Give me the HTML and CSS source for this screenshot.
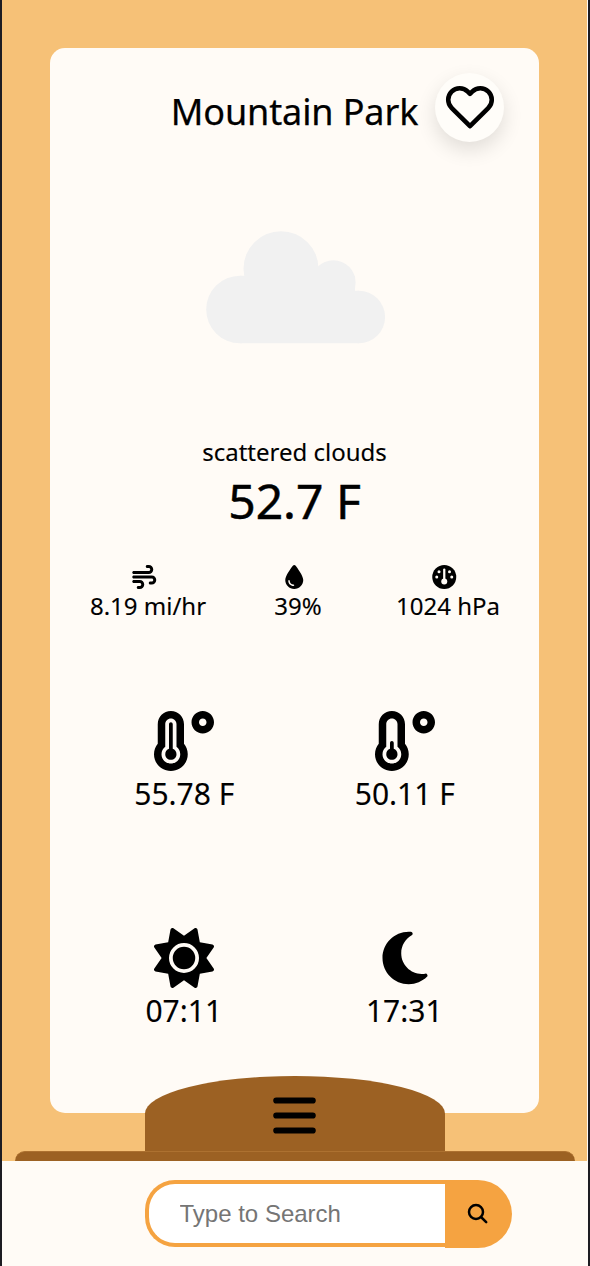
FILE: index.html
```html
<!DOCTYPE html>
<html lang="en">
<head>
<meta charset="utf-8">
<title>Mountain Park</title>
<link rel="stylesheet" href="styles.css">
</head>
<body>
<div class="app">
  <main class="stage">
    <section class="card">
      <header class="head">
        <h1 class="city">Mountain Park</h1>
        <button class="fav" aria-label="Favourite">
          <svg class="heart" viewBox="0 0 24 24"><path d="M20.84 4.61a5.5 5.5 0 0 0-7.78 0L12 5.67l-1.06-1.06a5.5 5.5 0 0 0-7.78 7.78l1.06 1.06L12 21.23l7.78-7.78 1.06-1.06a5.5 5.5 0 0 0 0-7.78z"/></svg>
        </button>
      </header>
      <svg class="cloud" viewBox="0 0 180 113">
        <circle cx="34" cy="78.5" r="33.8"/><circle cx="75" cy="37.7" r="37.5"/><circle cx="127.4" cy="51.5" r="22.2"/><circle cx="152.8" cy="86" r="26.3"/>
        <path d="M34 112.3V44.7H149V59.7H153V112.3z"/>
      </svg>
      <p class="summary">scattered clouds</p>
      <p class="now">52.7 F</p>
      <div class="stats">
        <div class="stat">
          <svg class="icon-sm" viewBox="0 0 512 512"><path d="M288 32c0 17.700 14.300 32 32 32h32c17.700 0 32 14.300 32 32s-14.300 32-32 32H32c-17.700 0-32 14.300-32 32s14.300 32 32 32H352c53 0 96-43 96-96s-43-96-96-96H320c-17.700 0-32 14.300-32 32zm64 352c0 17.700 14.300 32 32 32h32c53 0 96-43 96-96s-43-96-96-96H32c-17.700 0-32 14.300-32 32s14.300 32 32 32H416c17.700 0 32 14.300 32 32s-14.300 32-32 32H384c-17.700 0-32 14.300-32 32zM128 512h32c53 0 96-43 96-96s-43-96-96-96H32c-17.700 0-32 14.300-32 32s14.300 32 32 32H160c17.700 0 32 14.300 32 32s-14.300 32-32 32H128c-17.700 0-32 14.300-32 32s14.300 32 32 32z"/></svg>
          <span class="stat-label">8.19 mi/hr</span>
        </div>
        <div class="stat">
          <svg class="icon-sm" viewBox="-64 0 512 512"><path d="M192 512C86 512 0 426 0 320C0 228.800 130.200 57.700 166.600 11.700C172.600 4.200 181.500 0 191.100 0h1.800c9.600 0 18.500 4.200 24.500 11.700C253.800 57.700 384 228.800 384 320c0 106-86 192-192 192zM96 336c0-8.800-7.200-16-16-16s-16 7.200-16 16c0 61.900 50.100 112 112 112c8.800 0 16-7.200 16-16s-7.200-16-16-16c-44.200 0-80-35.800-80-80z"/></svg>
          <span class="stat-label">39%</span>
        </div>
        <div class="stat">
          <svg class="icon-sm" viewBox="0 0 512 512"><circle cx="256" cy="256" r="256"/><g class="cut"><rect x="232" y="72" width="48" height="260" rx="24"/><circle cx="256" cy="352" r="64"/><circle cx="144" cy="144" r="32"/><circle cx="368" cy="144" r="32"/><circle cx="96" cy="256" r="32"/><circle cx="416" cy="256" r="32"/></g></svg>
          <span class="stat-label">1024 hPa</span>
        </div>
      </div>
      <div class="pair temps">
        <div class="item">
          <svg class="icon-lg" viewBox="0 0 512 512"><path d="M416 0c-52.900 0-96 43.100-96 96s43.100 96 96 96 96-43.100 96-96-43.100-96-96-96zm0 128c-17.700 0-32-14.300-32-32s14.300-32 32-32 32 14.300 32 32-14.300 32-32 32zm-160-16C256 50.100 205.900 0 144 0S32 50.100 32 112v166.500C12.300 303.200 0 334 0 368c0 79.500 64.500 144 144 144s144-64.500 144-144c0-34-12.300-64.900-32-89.500V112zM144 448c-44.100 0-80-35.900-80-80 0-25.500 12.200-48.900 32-63.800V112c0-26.500 21.500-48 48-48s48 21.500 48 48v192.200c19.800 14.800 32 38.300 32 63.800 0 44.100-35.900 80-80 80zm16-125.100V112c0-8.800-7.200-16-16-16s-16 7.200-16 16v210.900c-18.600 6.600-32 24.200-32 45.100 0 26.500 21.500 48 48 48s48-21.500 48-48c0-20.900-13.400-38.500-32-45.100z"/></svg>
          <span class="item-label">55.78 F</span>
        </div>
        <div class="item">
          <svg class="icon-lg" viewBox="0 0 512 512"><path d="M416 0c-52.900 0-96 43.100-96 96s43.100 96 96 96 96-43.100 96-96-43.100-96-96-96zm0 128c-17.700 0-32-14.300-32-32s14.300-32 32-32 32 14.300 32 32-14.300 32-32 32zm-160-16C256 50.100 205.900 0 144 0S32 50.100 32 112v166.500C12.300 303.200 0 334 0 368c0 79.500 64.500 144 144 144s144-64.500 144-144c0-34-12.300-64.900-32-89.500V112zM144 448c-44.100 0-80-35.900-80-80 0-25.500 12.200-48.900 32-63.800V112c0-26.500 21.500-48 48-48s48 21.500 48 48v192.200c19.800 14.800 32 38.300 32 63.800 0 44.100-35.900 80-80 80zm16-125.100V272c0-8.800-7.200-16-16-16s-16 7.200-16 16v50.900c-18.600 6.600-32 24.200-32 45.100 0 26.500 21.500 48 48 48s48-21.500 48-48c0-20.900-13.400-38.500-32-45.100z"/></svg>
          <span class="item-label">50.11 F</span>
        </div>
      </div>
      <div class="pair times">
        <div class="item">
          <svg class="icon-lg" viewBox="0 0 512 512"><path d="M361.500 1.200c5 2.100 8.600 6.600 9.600 11.900L391 121l107.900 19.800c5.300 1 9.800 4.600 11.900 9.600s1.500 10.700-1.600 15.200L446.900 256l62.300 90.300c3.100 4.500 3.700 10.200 1.600 15.200s-6.600 8.600-11.900 9.600L391 391 371.100 498.900c-1 5.300-4.600 9.800-9.600 11.900s-10.700 1.500-15.200-1.600L256 446.900l-90.300 62.300c-4.500 3.100-10.200 3.700-15.200 1.600s-8.600-6.600-9.600-11.900L121 391 13.100 371.100c-5.300-1-9.800-4.600-11.900-9.600s-1.500-10.700 1.600-15.200L65.100 256 2.800 165.700c-3.100-4.500-3.700-10.200-1.600-15.200s6.600-8.600 11.900-9.600L121 121 140.900 13.100c1-5.300 4.600-9.800 9.600-11.900s10.700-1.500 15.200 1.600L256 65.100 346.300 2.800c4.500-3.100 10.200-3.700 15.200-1.600zM160 256a96 96 0 1 1 192 0 96 96 0 1 1 -192 0zm224 0a128 128 0 1 0 -256 0 128 128 0 1 0 256 0z"/></svg>
          <span class="item-label time">07:11</span>
        </div>
        <div class="item">
          <svg class="icon-lg" viewBox="-64 0 512 512"><path d="M223.500 32C100 32 0 132.300 0 256S100 480 223.500 480c60.600 0 115.500-24.200 155.800-63.400c5-4.900 6.300-12.500 3.100-18.700s-10.100-9.700-17-8.500c-9.800 1.700-19.800 2.600-30.100 2.600c-96.900 0-175.500-78.800-175.500-176c0-65.800 36-123.100 89.300-153.300c6.100-3.500 9.200-10.500 7.700-17.300s-7.300-11.900-14.300-12.500c-6.300-.5-12.600-.8-19-.8z"/></svg>
          <span class="item-label time">17:31</span>
        </div>
      </div>
    </section>
    <nav class="drawer">
      <button class="tab" aria-label="Menu">
        <svg class="bars" viewBox="0 0 43 37"><path d="M3.300 3.500H39.700M3.300 18.500H39.700M3.300 33.500H39.700"/></svg>
      </button>
      <div class="ledge"></div>
    </nav>
  </main>
  <form class="search">
    <input class="field" type="text" placeholder="Type to Search">
    <button class="go" type="button" aria-label="Search">
      <svg class="lens" viewBox="0 0 22 22"><circle cx="9" cy="9" r="7"/><path d="M14 14l5.200 5.200"/></svg>
    </button>
  </form>
</div>
</body>
</html>
```
FILE: styles.css
```css
* { box-sizing: border-box; }
body { margin: 0; background: #fffbf6; color: #000; font-family: "Noto Sans", sans-serif; }
h1, p { margin: 0; font-weight: 400; }
button { border: 0; padding: 0; color: inherit; }
svg { display: block; }

.app { height: 1266px; border: solid #1d1c22; border-width: 0 2px; overflow: hidden; }
.stage { position: relative; height: 1161px; margin-right: 1px; padding: 48px 48px 0; background: #f6c177; overflow: hidden; }
.card { height: 1065px; padding-top: 24px; border-radius: 15px; background: #fffbf6; display: flex; flex-direction: column; align-items: center; -webkit-text-stroke: .12px #000; }

.head { width: 100%; height: 70px; display: grid; grid-template-columns: 1fr auto 1fr; }
.city { grid-column: 2; padding-top: 10px; font-size: 36px; line-height: 60px; letter-spacing: -.12px; white-space: nowrap; -webkit-text-stroke-width: .25px; }
.fav { width: 69px; height: 69px; margin: .5px 0 0 17px; border-radius: 50%; background: #fffdf9; box-shadow: 0 8px 20px rgba(0, 0, 0, .12); display: grid; place-items: center; }
.heart { width: 50px; height: 50px; fill: none; stroke: #000; stroke-width: 2.2; stroke-linecap: round; stroke-linejoin: round; }

.cloud { width: 180px; height: 113px; margin: 88.500px 0 0 3px; fill: #f1f1f1; }
.summary { margin-top: 91px; font-size: 24px; line-height: 33px; }
.now { font-size: 48px; line-height: 65px; -webkit-text-stroke-width: .5px; }

.stats { width: 450px; margin-top: 32.500px; display: grid; grid-template-columns: repeat(3, 1fr); }
.stat, .item { display: flex; flex-direction: column; align-items: center; }
.icon-sm { width: 24.500px; height: 24px; }
.cut { fill: #fffbf6; }
.stat-label { padding-left: 7px; font-size: 24px; line-height: 33px; }

.pair { width: 441px; display: grid; grid-template-columns: 1fr 1fr; }
.temps { margin-top: 89px; }
.times { margin-top: 112px; }
.icon-lg { width: 60px; height: 60px; }
.item-label { padding-top: 1px; font-size: 30px; line-height: 44px; }
.time { padding-right: 1px; }

.drawer { position: absolute; left: 12.500px; bottom: 0; width: 560px; display: flex; flex-direction: column; align-items: center; }
.tab { width: 300px; height: 75px; padding-top: 21px; border-radius: 50% 50% 0 0; background: #9c6123; display: flex; flex-direction: column; align-items: center; }
.bars { width: 43px; height: 37px; fill: none; stroke: #000; stroke-width: 6.200; stroke-linecap: round; }
.ledge { width: 560px; height: 10px; background: #9c6123; border-top: 1px solid #ad7130; border-radius: 14px 14px 0 0; }

.search { display: flex; align-items: center; padding: 18.500px 0 0 142.500px; }
.field { width: 300px; height: 67px; padding: 1px 0 0 31px; border: 4px solid #f5a341; border-right: 0; border-radius: 30px 0 0 30px; background: #fff; font: 24px "Liberation Sans", sans-serif; }
.field::placeholder { color: #757575; }
.go { width: 67.500px; height: 68px; border-radius: 0 34px 34px 0; background: #f5a341; display: grid; place-items: center; }
.lens { width: 22px; height: 22px; fill: none; stroke: #000; stroke-width: 2.500; stroke-linecap: round; }
```
